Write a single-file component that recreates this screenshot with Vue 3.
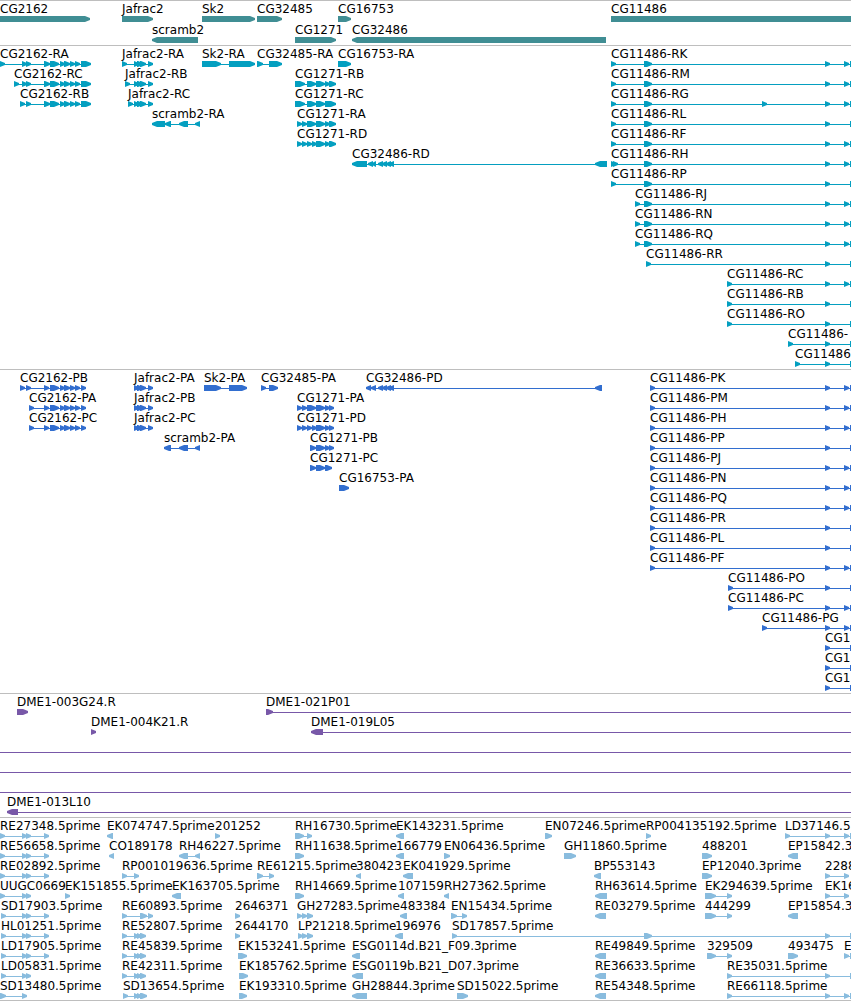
<script setup>
const FAR = '4000-4005'
const EDGE = '850-870'

// Feature notation: "label | direction | exon ranges"; a feature starts at its first exon.
function feature(text) {
  const [label, dir, ranges] = text.split('|').map((part) => part.trim())
  const exons = ranges
    .replace('EDGE', EDGE)
    .replace('FAR', FAR)
    .split(' ')
    .map((range) => range.split('-').map(Number))
  return { label, exons, reverse: dir === '<', start: exons[0][0], end: exons[exons.length - 1][1] }
}

function outline([a, b], reverse) {
  const head = Math.min(b - a, 5)
  if (head < 1) return ''
  return reverse
    ? `${b},0 ${a + head},0 ${a},2 ${a},4 ${a + head},6 ${b},6`
    : `${a},0 ${b - head},0 ${b},2 ${b},4 ${b - head},6 ${a},6`
}

const cg2162 = '44-50 50-59 60-65 64-70 70-75 75-80 81-91'
const cg2162p = '44-49 50-59 60-65 64-70 70-75 75-80 81-86'
const jafrac = '134-139 137-143 140-146 148-153'
const long = '825-830 844-849 EDGE'
const short = '825-830 EDGE'
const est = '22-27 26-31 44-49'

const source = [
  {
    name: 'genes',
    rows: [
      ['CG2162|>|0-90', 'Jafrac2|>|122-153', 'Sk2|>|202-255', 'CG32485|>|257-282', 'CG16753|>|338-351', 'CG11486|>|611-4000'],
      ['scramb2|<|152-198', 'CG1271|>|295-336', 'CG32486|<|352-606'],
    ],
  },
  {
    name: 'transcripts',
    rows: [
      [`CG2162-RA|>|0-5 22-27 26-31 ${cg2162}`, 'Jafrac2-RA|>|122-127 134-139 137-143 140-146 148-153', 'Sk2-RA|>|202-221 229-255', 'CG32485-RA|>|257-263 269-282', 'CG16753-RA|>|338-351', `CG11486-RK|>|611-616 644-652 ${long}`],
      [`CG2162-RC|>|14-19 22-27 26-31 ${cg2162}`, `Jafrac2-RB|>|125-130 ${jafrac}`, 'CG1271-RB|>|295-305 307-316 316-325 325-330 329-336', `CG11486-RM|>|611-616 644-652 ${long}`],
      [`CG2162-RB|>|20-25 26-31 ${cg2162}`, `Jafrac2-RC|>|128-133 ${jafrac}`, 'CG1271-RC|>|295-305 307-316 316-325 325-336', `CG11486-RG|>|611-616 644-652 762-767 ${long}`],
      ['scramb2-RA|<|152-165 165-171 179-188 195-200', 'CG1271-RA|>|297-302 302-307 307-316 316-325 325-330 329-336', `CG11486-RL|>|611-616 644-652 ${short}`],
      ['CG1271-RD|>|297-302 302-307 307-312 312-317 316-325 325-330 329-336', `CG11486-RF|>|611-616 644-652 ${long}`],
      ['CG32486-RD|<|352-367 368-373 372-376 378-383 382-387 386-391 389-394 595-607', `CG11486-RH|>|611-616 613-618 644-652 ${long}`],
      [`CG11486-RP|>|611-616 644-652 ${short}`],
      [`CG11486-RJ|>|635-640 644-652 ${long}`],
      [`CG11486-RN|>|635-640 644-652 ${long}`],
      [`CG11486-RQ|>|635-640 644-652 ${long}`],
      [`CG11486-RR|>|646-651 ${short}`],
      [`CG11486-RC|>|727-732 ${long}`],
      [`CG11486-RB|>|727-732 ${short}`],
      [`CG11486-RO|>|727-732 ${short}`],
      [`CG11486-|>|788-793 ${short}`],
      [`CG11486|>|795-800 ${short}`],
    ],
  },
  {
    name: 'proteins',
    rows: [
      [`CG2162-PB|>|20-25 26-31 ${cg2162p}`, `Jafrac2-PA|>|${jafrac}`, 'Sk2-PA|>|204-221 229-247', 'CG32485-PA|>|261-266 269-278', 'CG32486-PD|<|366-371 371-376 378-383 382-387 386-391 389-394 595-602', `CG11486-PK|>|650-655 ${long}`],
      [`CG2162-PA|>|29-34 ${cg2162p}`, `Jafrac2-PB|>|${jafrac}`, 'CG1271-PA|>|297-302 302-307 307-316 316-325 325-330 329-334', `CG11486-PM|>|650-655 ${long}`],
      [`CG2162-PC|>|29-34 ${cg2162p}`, `Jafrac2-PC|>|${jafrac}`, 'CG1271-PD|>|297-302 302-307 307-312 312-317 316-325 325-330 329-334', `CG11486-PH|>|650-655 ${long}`],
      ['scramb2-PA|<|164-171 179-188 195-200', 'CG1271-PB|>|310-316 316-325 325-330 329-334', `CG11486-PP|>|650-655 ${short}`],
      ['CG1271-PC|>|310-316 316-325 325-332', `CG11486-PJ|>|650-655 ${long}`],
      ['CG16753-PA|>|339-349', `CG11486-PN|>|650-655 ${long}`],
      [`CG11486-PQ|>|650-655 ${long}`],
      [`CG11486-PR|>|650-655 ${short}`],
      [`CG11486-PL|>|650-655 ${short}`],
      [`CG11486-PF|>|650-655 ${long}`],
      [`CG11486-PO|>|728-733 ${short}`],
      [`CG11486-PC|>|728-733 ${long}`],
      [`CG11486-PG|>|762-767 ${long}`],
      [`CG1|>|${short}`],
      [`CG1|>|${short}`],
      [`CG1|>|${short}`],
    ],
  },
  {
    name: 'clones',
    rows: [
      ['DME1-003G24.R|>|17-28', 'DME1-021P01|>|266-273 FAR'],
      ['DME1-004K21.R|>|91-96', 'DME1-019L05|<|311-323 FAR'],
      ['|>|0-0 FAR'],
      ['|>|0-0 FAR'],
      ['|>|0-0 FAR'],
      ['DME1-013L10|<|7-18 FAR'],
    ],
  },
  {
    name: 'ests',
    rows: [
      [`RE27348.5prime|>|0-5 ${est}`, 'EK074747.5prime|<|107-113', '201252|>|215-220', 'RH16730.5prime|>|295-304 307-312', 'EK143231.5prime|<|396-404', 'EN07246.5prime|>|545-552', 'RP004135192.5prime|>|646-651', `LD37146.5|>|785-790 ${long}`],
      [`RE56658.5prime|>|0-5 ${est}`, 'CO189178|<|109-114', 'RH46227.5prime|<|179-188 195-200', 'RH11638.5prime|>|295-304', '166779|<|396-404', 'EN06436.5prime|>|444-450', 'GH11860.5prime|>|564-576', '488201|>|702-712', 'EP15842.3|<|788-798'],
      [`RE02892.5prime|>|0-5 ${est}`, 'RP001019636.5prime|>|122-127 134-139', 'RE61215.5prime|>|257-263 269-274', '380423|<|356-361', 'EK041929.5prime|<|403-413', 'BP553143|<|594-601', 'EP12040.3prime|>|702-712', '2288|>|825-830 844-849'],
      ['UUGC0669|>|0-5 22-27 26-31', 'EK151855.5prime|>|65-70', 'EK163705.5prime|<|172-181', 'RH14669.5prime|>|295-304', '107159|<|398-404', 'RH27362.5prime|<|444-449', 'RH63614.5prime|<|595-607', 'EK294639.5prime|>|705-716 727-732', 'EK16|>|825-830 844-849'],
      [`SD17903.5prime|>|1-6 ${est}`, 'RE60893.5prime|>|122-127 140-147 148-153', '2646371|>|235-240', 'GH27283.5prime|>|297-302 302-307 307-313', '483384|<|400-407', 'EN15434.5prime|>|451-457 462-467', 'RE03279.5prime|<|595-606', '444299|>|705-716 727-732', 'EP15854.3|<|788-798'],
      [`HL01251.5prime|>|1-6 ${est}`, 'RE52807.5prime|>|122-127 134-139 137-142 140-146', '2644170|>|235-240', 'LP21218.5prime|>|298-303 302-307 307-313', '196976|<|395-403', `SD17857.5prime|>|452-457 644-652 ${short}`],
      [`LD17905.5prime|>|1-6 ${est}`, 'RE45839.5prime|>|122-127 134-139 137-142 140-146', 'EK153241.5prime|>|238-247', 'ESG0114d.B21_F09.3prime|<|352-360', 'RE49849.5prime|<|595-606', '329509|>|707-716 727-732', '493475|>|788-798', 'E|>|844-849 EDGE'],
      ['LD05831.5prime|>|1-6 22-27 26-31', 'RE42311.5prime|>|122-127 134-139 137-142 140-146', 'EK185762.5prime|>|239-248', 'ESG0119b.B21_D07.3prime|<|352-363', 'RE36633.5prime|<|595-606', `RE35031.5prime|>|727-732 ${short}`],
      ['SD13480.5prime|>|0-6 22-27', 'SD13654.5prime|>|123-128 134-139 137-142 140-147', 'EK193310.5prime|>|239-247', 'GH28844.3prime|<|352-367', 'SD15022.5prime|>|457-468', 'RE54348.5prime|<|595-606', `RE66118.5prime|>|727-732 ${long}`],
    ],
  },
]

const tracks = source.map((track) => ({ name: track.name, rows: track.rows.map((row) => row.map(feature)) }))
</script>

<template>
  <main class="browser">
    <section v-for="track in tracks" :key="track.name" class="track" :class="track.name">
      <div v-for="(row, r) in track.rows" :key="r" class="row">
        <template v-for="(f, i) in row" :key="i">
          <span v-if="f.label" class="label" :style="{ left: f.start + 'px' }">{{ f.label }}</span>
        </template>
        <svg class="glyphs" aria-hidden="true">
          <g v-for="(f, i) in row" :key="i">
            <rect v-if="f.exons.length > 1" :x="f.start" y="3" :width="f.end - f.start" height="1" />
            <polygon v-for="(exon, e) in f.exons" :key="e" :points="outline(exon, f.reverse)" />
          </g>
        </svg>
      </div>
    </section>
  </main>
</template>

<style>
body {
  background: #fff;
}
</style>

<style scoped>
.browser {
  overflow: hidden;
  border-bottom: 1px solid #bebebe;
  color: #000;
  font: 12px/16px "DejaVu Sans", "Noto Sans", sans-serif;
}
.track {
  border-top: 1px solid #bebebe;
  padding-bottom: 3px;
}
.row {
  position: relative;
  box-sizing: border-box;
  height: 20px;
  padding-top: 15px;
}
.label {
  position: absolute;
  top: 0;
  white-space: nowrap;
}
.glyphs {
  display: block;
  width: 100%;
  height: 6px;
}
.genes {
  fill: #408e94;
  padding-bottom: 2px;
}
.genes .row {
  height: 21px;
}
.transcripts {
  fill: #049fc0;
}
.proteins {
  fill: #326ecf;
}
.clones {
  fill: #7858a8;
}
.ests {
  fill: #89bcde;
  padding-bottom: 2px;
}
</style>
